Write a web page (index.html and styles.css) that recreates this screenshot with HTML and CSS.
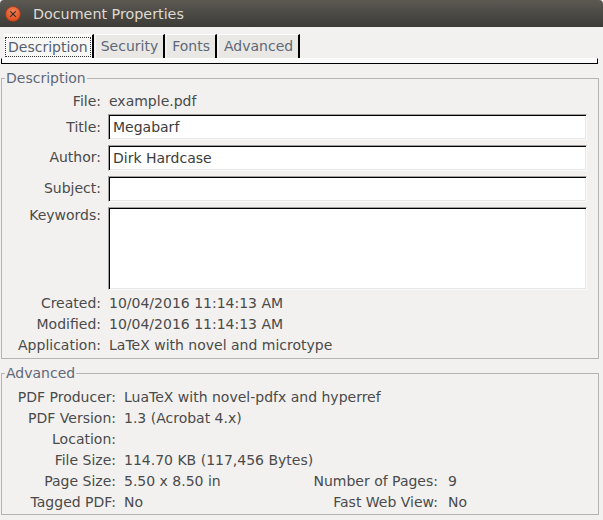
FILE: index.html
```html
<!DOCTYPE html>
<html lang="en">
<head>
<meta charset="utf-8">
<title>Document Properties</title>
<link rel="stylesheet" href="styles.css">
</head>
<body>
<div class="window">
  <header class="titlebar">
    <span class="close">
      <svg width="16" height="16" viewBox="0 0 16 16">
        <defs>
          <radialGradient id="cg" cx="50%" cy="35%" r="65%">
            <stop offset="0" stop-color="#f4845a"/>
            <stop offset="1" stop-color="#d9481a"/>
          </radialGradient>
        </defs>
        <circle cx="8" cy="8" r="7.5" fill="url(#cg)" stroke="#9a3414" stroke-width="0.6"/>
        <path d="M5.6 5.6 L10.4 10.4 M10.4 5.6 L5.6 10.4" stroke="#3b2a22" stroke-width="1.2" stroke-linecap="round"/>
      </svg>
    </span>
    <span class="title">Document Properties</span>
  </header>

  <nav class="tabs">
    <div class="tab active"><span class="focus">Description</span></div>
    <div class="tab">Security</div>
    <div class="tab">Fonts</div>
    <div class="tab">Advanced</div>
  </nav>
  <div class="pane"></div>

  <fieldset class="group desc">
    <legend>Description</legend>
    <div class="desc-grid">
      <span class="lbl">File:</span><span class="val">example.pdf</span>
      <span class="lbl mid">Title:</span><div class="entry first">Megabarf</div>
      <span class="lbl mid">Author:</span><div class="entry">Dirk Hardcase</div>
      <span class="lbl mid">Subject:</span><div class="entry"></div>
      <span class="lbl top">Keywords:</span><div class="entry area"></div>
      <span class="lbl">Created:</span><span class="val">10/04/2016 11:14:13 AM</span>
      <span class="lbl">Modified:</span><span class="val">10/04/2016 11:14:13 AM</span>
      <span class="lbl">Application:</span><span class="val">LaTeX with novel and microtype</span>
    </div>
  </fieldset>

  <fieldset class="group adv">
    <legend>Advanced</legend>
    <div class="adv-grid">
      <span class="lbl">PDF Producer:</span><span class="val span3">LuaTeX with novel-pdfx and hyperref</span>
      <span class="lbl">PDF Version:</span><span class="val span3">1.3 (Acrobat 4.x)</span>
      <span class="lbl">Location:</span><span class="val span3"></span>
      <span class="lbl">File Size:</span><span class="val span3">114.70 KB (117,456 Bytes)</span>
      <span class="lbl">Page Size:</span><span class="val">5.50 x 8.50 in</span>
      <span class="lbl">Number of Pages:</span><span class="val val2">9</span>
      <span class="lbl">Tagged PDF:</span><span class="val">No</span>
      <span class="lbl">Fast Web View:</span><span class="val val2">No</span>
    </div>
  </fieldset>
</div>
</body>
</html>
```

FILE: styles.css
```css
* { box-sizing: border-box; }

html, body {
  margin: 0;
  background: #f2f1f0;
}

body {
  font-family: "DejaVu Sans", "Noto Sans", sans-serif;
  font-size: 14px;
  color: #4a4a4a;
}

.window {
  width: 603px;
  height: 520px;
  overflow: hidden;
}

.titlebar {
  height: 27px;
  display: flex;
  align-items: center;
  padding-left: 5px;
  background: linear-gradient(#5c5953, #3c3b37);
  border-radius: 4px 4px 0 0;
}

.close {
  width: 16px;
  height: 16px;
  display: flex;
  margin-top: 1px;
}

.title {
  margin-left: 12px;
  margin-top: 1px;
  color: #dfdbd2;
  font-size: 14.3px;
}

.tabs {
  display: flex;
  margin: 7px 0 0 4px;
  height: 24px;
}

.tab {
  display: flex;
  align-items: center;
  padding: 0 5px;
  margin-right: 2px;
  background: #e9e8e5;
  border-top: 1px solid #ffffff;
  border-right: 2px solid #000000;
  color: #5e6878;
  line-height: 17px;
}

.tab.active {
  padding: 0 1px;
  background: #f7f7f6;
  color: #56606e;
}

.focus {
  border: 1px dotted #333333;
  padding: 0 2px;
  line-height: 18px;
}

.pane {
  height: 6px;
  margin: 0 5px 0 1px;
  background: #fbfbfb;
  border: 1px solid #000000;
  border-top-color: #ffffff;
}

.group {
  margin: 6px 4px 0 1px;
  padding: 0 11px 2px 0;
  border: 1px solid #b4b4b4;
  min-width: 0;
}

.group.adv {
  padding-bottom: 1px;
}

.group legend {
  margin-left: 3px;
  padding: 0 1px;
  line-height: 16px;
  color: #5e6878;
}

.desc-grid {
  display: grid;
  grid-template-columns: 99px 1fr;
  column-gap: 7px;
  padding-top: 5px;
}

.adv-grid {
  display: grid;
  grid-template-columns: 114px 180px 128px 1fr;
  column-gap: 7px;
  padding-top: 6px;
}

.lbl {
  text-align: right;
  line-height: 21px;
  white-space: nowrap;
}

.lbl.mid {
  align-self: center;
  line-height: 17px;
}

.lbl.top {
  align-self: start;
  margin-top: 3px;
  line-height: 17px;
}

.val {
  line-height: 21px;
  padding-left: 1px;
  white-space: nowrap;
  min-height: 21px;
}

.val2 {
  padding-left: 3px;
}

.span3 {
  grid-column: span 3;
}

.entry {
  height: 26px;
  margin: 3px 0 2px;
  padding: 0 4px;
  background: #ffffff;
  border: 1px solid;
  border-color: #a0a0a0 #fafafa #fafafa #a0a0a0;
  box-shadow: inset 1px 1px 0 #000000, inset -1px -1px 0 #e6e6e6;
  color: #3c3c3c;
  line-height: 24px;
}

.entry.first {
  margin-top: 2px;
}

.entry.area {
  height: 83px;
  margin-bottom: 3px;
}
```
